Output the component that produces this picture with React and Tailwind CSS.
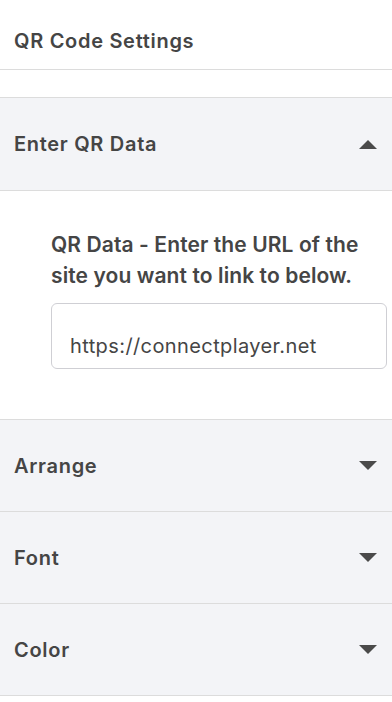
import React, { useState } from "react";

function Caret({ up }) {
  return (
    <svg width="18" height="9" viewBox="0 0 18 9" className="shrink-0">
      {up ? (
        <path d="M0 9 L9 0 L18 9 Z" fill="#4a4a4a" />
      ) : (
        <path d="M0 0 L18 0 L9 9 Z" fill="#4a4a4a" />
      )}
    </svg>
  );
}

function SectionHeader({ title, open, onClick }) {
  return (
    <button
      onClick={onClick}
      className="w-full h-[92px] flex items-center justify-between pl-[14px] pr-[15px] bg-[#f3f4f7] border-b border-[#dcdcdc] text-left"
    >
      <span className="text-[20px] font-semibold tracking-[0.7px]">{title}</span>
      <Caret up={open} />
    </button>
  );
}

export default function App() {
  const [open, setOpen] = useState("data");
  const [url, setUrl] = useState("https://connectplayer.net");

  const toggle = (key) => setOpen(open === key ? null : key);

  return (
    <div
      className="w-[392px] min-h-[702px] bg-white text-[#454545]"
      style={{ fontFamily: "Inter, 'Noto Sans', sans-serif" }}
    >
      {/* HEADER */}
      <div className="h-[70px] flex items-center pt-3 pl-[14px] border-b border-[#dcdcdc]">
        <h1 className="text-[20px] font-semibold tracking-[0.7px]">QR Code Settings</h1>
      </div>

      <div className="h-[28px] border-b border-[#dcdcdc]" />

      {/* ENTER QR DATA */}
      <button
        onClick={() => toggle("data")}
        className="w-full h-[93px] flex items-center justify-between pl-[14px] pr-[15px] bg-[#f3f4f7] border-b border-[#dcdcdc] text-left"
      >
        <span className="text-[20px] font-semibold tracking-[0.7px]">Enter QR Data</span>
        <Caret up={open === "data"} />
      </button>

      {open === "data" && (
        <div className="pt-[38px] pb-[50px] pl-[51px] pr-[5px] border-b border-[#dcdcdc]">
          <p className="text-[21px] font-semibold tracking-[0.1px] leading-[31px]">
            QR Data - Enter the URL of the site you want to link to below.
          </p>
          <input
            value={url}
            onChange={(e) => setUrl(e.target.value)}
            className="mt-[12px] w-full h-[66px] pt-[20px] pl-[18px] pr-3 border border-[#cfcfd4] rounded-[6px] text-[20px] tracking-[0.4px] text-[#454545] outline-none"
          />
        </div>
      )}

      <SectionHeader title="Arrange" open={open === "arrange"} onClick={() => toggle("arrange")} />
      <SectionHeader title="Font" open={open === "font"} onClick={() => toggle("font")} />
      <SectionHeader title="Color" open={open === "color"} onClick={() => toggle("color")} />
    </div>
  );
}
